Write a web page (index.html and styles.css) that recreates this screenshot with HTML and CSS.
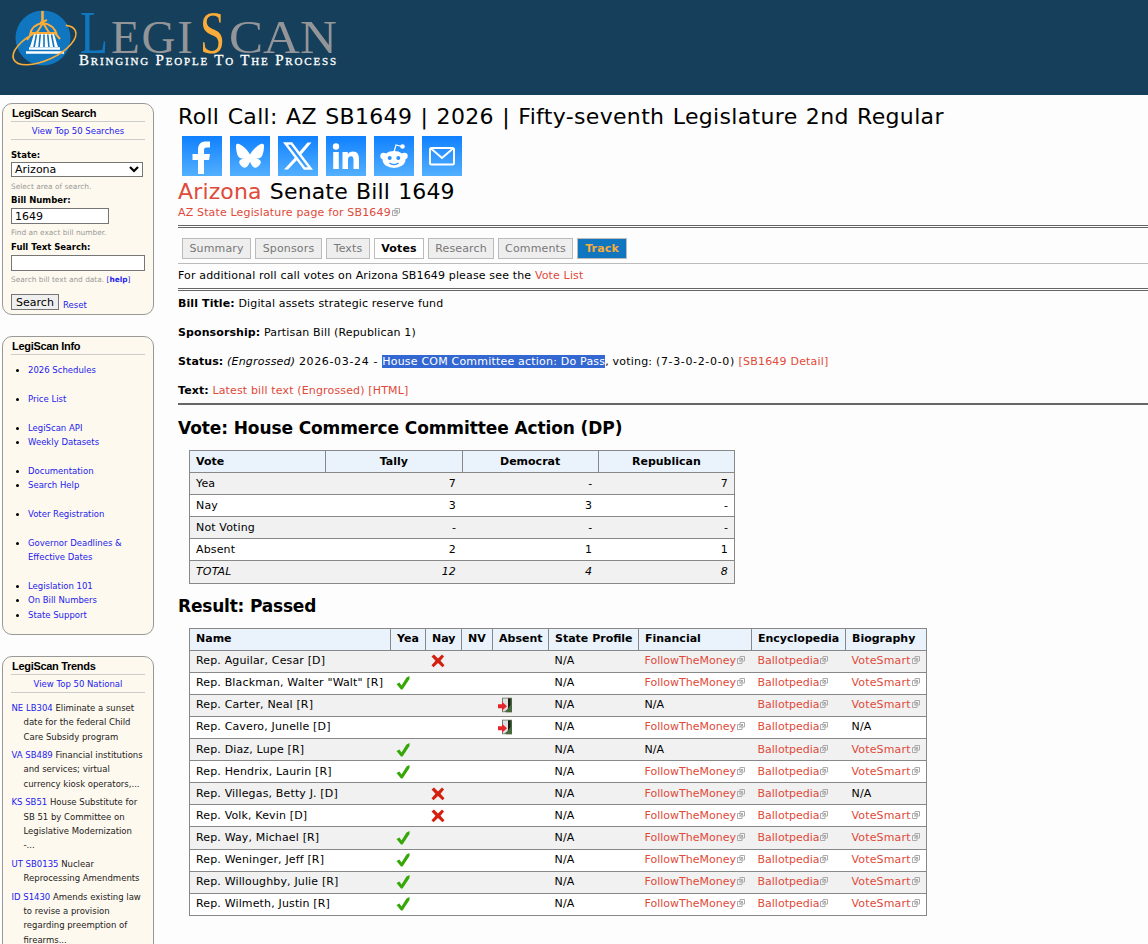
FILE: index.html
```html
<!DOCTYPE html>
<html lang="en">
<head>
  <meta charset="UTF-8">
  <meta name="viewport" content="width=device-width, initial-scale=1.0">
  <title>Roll Call: AZ SB1649 | LegiScan</title>
  <link rel="stylesheet" href="styles.css">
</head>
<body>

  <!-- Shared icons -->
  <svg class="sprite">
    <symbol id="ext" viewBox="0 0 8 8">
      <path d="M3 .5h4.500v4.500H3zM3 2.500H.5v5H5V5M2.500 5.500L5.500 2.500M3.500 2.500h2v2" fill="none" stroke="#aaa"/>
    </symbol>
    <symbol id="yea" viewBox="0 0 16 16">
      <path d="M1.500 9L4.500 7.500l2 3L11.500 2.500l3-1.500v3L7.500 14.500H6z" fill="#35a808"/>
    </symbol>
    <symbol id="nay" viewBox="0 0 16 16">
      <path d="M1.500 3.500L4 1.500 8 5.500 12 1.500 14 3.500 10.500 7.700l4 4.500-2 2L8 10l-4.500 4.200-2-2L5.500 7.700z" fill="#d3200f"/>
    </symbol>
    <symbol id="door" viewBox="0 0 16 16">
      <path d="M5 .7h10v14.500H5z" fill="#6f7a6a"/>
      <path d="M11 1.500h4v13.700H9z" fill="#48693c"/>
      <path d="M6 1.500h5v10.500L7 14.500H6z" fill="#e0e0e0"/>
      <path d="M11 1.500h2.500v6.500L9.500 14 11 11z" fill="#1c211a"/>
      <path d="M1 7.200h4V4.700l5 4.500-5 4.500v-2.500H1z" fill="#e8252a"/>
    </symbol>
  </svg>

  <header class="header">
    <svg class="logo" width="330" height="62" viewBox="0 0 330 62">
      <circle cx="30" cy="29" r="27.500" fill="#1176c0"/>
      <path d="M17 38l4-13h20l4 13z" fill="#fff"/>
      <path d="M21 38.500l2.500-13M26 38.500l1.200-13M31 38.500v-13M36 38.500l-1.200-13M41 38.500l-2.500-13" stroke="#1176c0" stroke-width="1.600"/>
      <path d="M16 39.500h31M13 43.500h38" stroke="#fff" stroke-width="2.500"/>
      <path d="M14 31l5-7h23l5 6M17 26c1-7 6-11 13-12 7 1 12 5 14 12M30 14l-7 11M30 14l7 11M27 14l7-3" fill="none" stroke="#fbac38" stroke-width="2"/>
      <path d="M29.500 2v12" stroke="#fbac38" stroke-width="2.600"/>
      <ellipse cx="31.500" cy="36" rx="34" ry="15" transform="rotate(-25 31.500 36)" fill="none" stroke="#fbac38" stroke-width="1.600" stroke-dasharray="128 30" stroke-dashoffset="-148" />
      <text class="logo-name" y="43.500"><tspan x="67" class="logo-l" textLength="28" lengthAdjust="spacingAndGlyphs">L</tspan><tspan x="98" textLength="82" lengthAdjust="spacing">EGI</tspan><tspan x="187" class="logo-s" textLength="25" lengthAdjust="spacingAndGlyphs">S</tspan><tspan x="216" textLength="108" lengthAdjust="spacingAndGlyphs">CAN</tspan></text>
      <text class="logo-tag" x="66" y="56" textLength="257">Bringing People To The Process</text>
    </svg>
  </header>

  <div class="page">

    <aside class="sidebar">
      <section class="box search">
        <h2>LegiScan Search</h2>
        <p class="top"><a href="#">View Top 50 Searches</a></p>
        <form>
          <label for="state">State:</label>
          <div class="select" id="state">Arizona
            <svg width="10" height="7" viewBox="0 0 10 7"><path d="M1 1l4 4 4-4" fill="none" stroke="#000" stroke-width="2.200"/></svg>
          </div>
          <p class="hint">Select area of search.</p>
          <label for="bill">Bill Number:</label>
          <input id="bill" class="bill" type="text" value="1649">
          <p class="hint">Find an exact bill number.</p>
          <label for="full">Full Text Search:</label>
          <input id="full" type="text">
          <p class="hint">Search bill text and data. <a href="#">[<b>help</b>]</a></p>
          <div class="actions"><button type="button">Search</button><a href="#">Reset</a></div>
        </form>
      </section>

      <section class="box info">
        <h2>LegiScan Info</h2>
        <ul>
          <li><a href="#">2026 Schedules</a></li>
          <li class="gap"><a href="#">Price List</a></li>
          <li class="gap"><a href="#">LegiScan API</a></li>
          <li><a href="#">Weekly Datasets</a></li>
          <li class="gap"><a href="#">Documentation</a></li>
          <li><a href="#">Search Help</a></li>
          <li class="gap"><a href="#">Voter Registration</a></li>
          <li class="gap"><a href="#">Governor Deadlines &amp;<br>Effective Dates</a></li>
          <li class="gap"><a href="#">Legislation 101</a></li>
          <li><a href="#">On Bill Numbers</a></li>
          <li><a href="#">State Support</a></li>
        </ul>
      </section>

      <section class="box trends">
        <h2>LegiScan Trends</h2>
        <p class="top"><a href="#">View Top 50 National</a></p>
        <p class="trend"><a href="#">NE LB304</a> Eliminate a sunset<br>date for the federal Child<br>Care Subsidy program</p>
        <p class="trend"><a href="#">VA SB489</a> Financial institutions<br>and services; virtual<br>currency kiosk operators,...</p>
        <p class="trend"><a href="#">KS SB51</a> House Substitute for<br>SB 51 by Committee on<br>Legislative Modernization<br>-...</p>
        <p class="trend"><a href="#">UT SB0135</a> Nuclear<br>Reprocessing Amendments</p>
        <p class="trend"><a href="#">ID S1430</a> Amends existing law<br>to revise a provision<br>regarding preemption of<br>firearms...</p>
      </section>
    </aside>

    <main class="content">
      <h1>Roll Call: AZ SB1649 | 2026 | Fifty-seventh Legislature 2nd Regular</h1>

      <div class="share">
        <a href="#"><svg viewBox="0 0 40 40"><path d="M16 38V24h-5.500v-6H16v-4c0-6 3-8.500 8-8.500h4v6h-3c-2.500 0-3 1.200-3 3.200V18h6l-1 6h-5v14z" fill="#fff"/></svg></a>
        <a href="#"><svg viewBox="0 0 40 40"><path d="M20 18.500C18 14.500 13 9.500 9 8c-2-.7-3 .2-3 2 0 3 .8 8 2 10 1.200 2 3.500 2.800 6 2.500-4 .7-6.500 2.500-3.500 6.500 4.500 6 8 1 9.500-3.500 1.500 4.500 5 9.500 9.500 3.500 3-4 .5-5.800-3.500-6.500 2.500.3 4.800-.5 6-2.500 1.200-2 2-7 2-10 0-1.800-1-2.700-3-2-4 1.500-9 6.500-11 10.500z" fill="#fff"/></svg></a>
        <a href="#"><svg viewBox="0 0 40 40"><path d="M7.500 7.500h6l19 25h-6z" fill="none" stroke="#fff" stroke-width="2.500"/><path d="M29.500 6.500h4L22.500 19.500l-2-2.500zM17 21.500l2 2.500L10 33.500H6z" fill="#fff"/></svg></a>
        <a href="#"><svg viewBox="0 0 40 40"><circle cx="10" cy="10.500" r="3.200" fill="#fff"/><path d="M7.200 16h5.600v17H7.200zM16.500 16h5.300v2.300c1-1.700 2.800-2.700 5.200-2.700 4.500 0 6 3 6 7.500V33h-5.500v-9c0-2.300-.6-3.700-2.500-3.700-2.200 0-3 1.500-3 3.700v9h-5.500z" fill="#fff"/></svg></a>
        <a href="#"><svg viewBox="0 0 40 40"><ellipse cx="20" cy="23.500" rx="11.500" ry="8.500" fill="#fff"/><circle cx="9.500" cy="20" r="3.200" fill="#fff"/><circle cx="30.500" cy="20" r="3.200" fill="#fff"/><path d="M20 16l2-7 6 1.500" fill="none" stroke="#fff" stroke-width="1.200"/><circle cx="28.500" cy="10.500" r="2.300" fill="#fff"/><circle cx="15.700" cy="22" r="2" fill="#2b93ff"/><circle cx="24.300" cy="22" r="2" fill="#2b93ff"/><path d="M15.500 27c2.500 2.200 6.500 2.200 9 0" fill="none" stroke="#2b93ff" stroke-width="1.400"/></svg></a>
        <a href="#"><svg viewBox="0 0 40 40"><rect x="8" y="12" width="24" height="16.500" rx="1.500" fill="none" stroke="#fff" stroke-width="2"/><path d="M9 12.500l11 9.500 11-9.500" fill="none" stroke="#fff" stroke-width="2"/></svg></a>
      </div>

      <p class="bill-name"><a href="#">Arizona</a> Senate Bill 1649</p>
      <p class="source"><a href="#">AZ State Legislature page for SB1649<svg class="ext"><use href="#ext"/></svg></a></p>

      <nav class="tabs">
        <a href="#" class="t1">Summary</a>
        <a href="#" class="t2">Sponsors</a>
        <a href="#" class="t3">Texts</a>
        <a href="#" class="t4 active">Votes</a>
        <a href="#" class="t5">Research</a>
        <a href="#" class="t6">Comments</a>
        <a href="#" class="t7 track">Track</a>
      </nav>

      <p class="note">For additional roll call votes on Arizona SB1649 please see the <a href="#">Vote List</a></p>

      <div class="meta">
        <p><b>Bill Title:</b> Digital assets strategic reserve fund</p>
        <p><b>Sponsorship:</b> Partisan Bill (Republican 1)</p>
        <p class="status"><b>Status:</b> <i>(Engrossed)</i> <span class="num">2026-03-24 - </span><span class="selected">House COM Committee action: Do Pass</span>, voting: <span class="num">(7-3-0-2-0-0)</span> <a href="#">[SB1649 Detail]</a></p>
        <p><b>Text:</b> <a href="#">Latest bill text (Engrossed) [HTML]</a></p>
      </div>

      <h3 class="vote-title">Vote: House Commerce Committee Action (DP)</h3>
      <table class="tally">
        <tr><th>Vote</th><th>Tally</th><th>Democrat</th><th>Republican</th></tr>
        <tr><td>Yea</td><td>7</td><td>-</td><td>7</td></tr>
        <tr><td>Nay</td><td>3</td><td>3</td><td>-</td></tr>
        <tr><td>Not Voting</td><td>-</td><td>-</td><td>-</td></tr>
        <tr><td>Absent</td><td>2</td><td>1</td><td>1</td></tr>
        <tr class="total"><td>TOTAL</td><td>12</td><td>4</td><td>8</td></tr>
      </table>

      <h3 class="result-title">Result: Passed</h3>
      <table class="votes">
        <colgroup><col class="c1"><col class="c2"><col class="c3"><col class="c4"><col class="c5"><col class="c6"><col class="c7"><col class="c8"><col class="c9"></colgroup>
        <tr><th>Name</th><th>Yea</th><th>Nay</th><th>NV</th><th>Absent</th><th>State Profile</th><th>Financial</th><th>Encyclopedia</th><th>Biography</th></tr>
        <tr><td>Rep. Aguilar, Cesar [D]</td><td></td><td><svg class="mark"><use href="#nay"/></svg></td><td></td><td></td><td>N/A</td><td><a href="#">FollowTheMoney<svg class="ext"><use href="#ext"/></svg></a></td><td><a href="#">Ballotpedia<svg class="ext"><use href="#ext"/></svg></a></td><td><a href="#">VoteSmart<svg class="ext"><use href="#ext"/></svg></a></td></tr>
        <tr><td>Rep. Blackman, Walter "Walt" [R]</td><td><svg class="mark"><use href="#yea"/></svg></td><td></td><td></td><td></td><td>N/A</td><td><a href="#">FollowTheMoney<svg class="ext"><use href="#ext"/></svg></a></td><td><a href="#">Ballotpedia<svg class="ext"><use href="#ext"/></svg></a></td><td><a href="#">VoteSmart<svg class="ext"><use href="#ext"/></svg></a></td></tr>
        <tr><td>Rep. Carter, Neal [R]</td><td></td><td></td><td></td><td><svg class="mark"><use href="#door"/></svg></td><td>N/A</td><td>N/A</td><td><a href="#">Ballotpedia<svg class="ext"><use href="#ext"/></svg></a></td><td><a href="#">VoteSmart<svg class="ext"><use href="#ext"/></svg></a></td></tr>
        <tr><td>Rep. Cavero, Junelle [D]</td><td></td><td></td><td></td><td><svg class="mark"><use href="#door"/></svg></td><td>N/A</td><td><a href="#">FollowTheMoney<svg class="ext"><use href="#ext"/></svg></a></td><td><a href="#">Ballotpedia<svg class="ext"><use href="#ext"/></svg></a></td><td>N/A</td></tr>
        <tr><td>Rep. Diaz, Lupe [R]</td><td><svg class="mark"><use href="#yea"/></svg></td><td></td><td></td><td></td><td>N/A</td><td>N/A</td><td><a href="#">Ballotpedia<svg class="ext"><use href="#ext"/></svg></a></td><td><a href="#">VoteSmart<svg class="ext"><use href="#ext"/></svg></a></td></tr>
        <tr><td>Rep. Hendrix, Laurin [R]</td><td><svg class="mark"><use href="#yea"/></svg></td><td></td><td></td><td></td><td>N/A</td><td><a href="#">FollowTheMoney<svg class="ext"><use href="#ext"/></svg></a></td><td><a href="#">Ballotpedia<svg class="ext"><use href="#ext"/></svg></a></td><td><a href="#">VoteSmart<svg class="ext"><use href="#ext"/></svg></a></td></tr>
        <tr><td>Rep. Villegas, Betty J. [D]</td><td></td><td><svg class="mark"><use href="#nay"/></svg></td><td></td><td></td><td>N/A</td><td><a href="#">FollowTheMoney<svg class="ext"><use href="#ext"/></svg></a></td><td><a href="#">Ballotpedia<svg class="ext"><use href="#ext"/></svg></a></td><td>N/A</td></tr>
        <tr><td>Rep. Volk, Kevin [D]</td><td></td><td><svg class="mark"><use href="#nay"/></svg></td><td></td><td></td><td>N/A</td><td><a href="#">FollowTheMoney<svg class="ext"><use href="#ext"/></svg></a></td><td><a href="#">Ballotpedia<svg class="ext"><use href="#ext"/></svg></a></td><td><a href="#">VoteSmart<svg class="ext"><use href="#ext"/></svg></a></td></tr>
        <tr><td>Rep. Way, Michael [R]</td><td><svg class="mark"><use href="#yea"/></svg></td><td></td><td></td><td></td><td>N/A</td><td><a href="#">FollowTheMoney<svg class="ext"><use href="#ext"/></svg></a></td><td><a href="#">Ballotpedia<svg class="ext"><use href="#ext"/></svg></a></td><td><a href="#">VoteSmart<svg class="ext"><use href="#ext"/></svg></a></td></tr>
        <tr><td>Rep. Weninger, Jeff [R]</td><td><svg class="mark"><use href="#yea"/></svg></td><td></td><td></td><td></td><td>N/A</td><td><a href="#">FollowTheMoney<svg class="ext"><use href="#ext"/></svg></a></td><td><a href="#">Ballotpedia<svg class="ext"><use href="#ext"/></svg></a></td><td><a href="#">VoteSmart<svg class="ext"><use href="#ext"/></svg></a></td></tr>
        <tr><td>Rep. Willoughby, Julie [R]</td><td><svg class="mark"><use href="#yea"/></svg></td><td></td><td></td><td></td><td>N/A</td><td><a href="#">FollowTheMoney<svg class="ext"><use href="#ext"/></svg></a></td><td><a href="#">Ballotpedia<svg class="ext"><use href="#ext"/></svg></a></td><td><a href="#">VoteSmart<svg class="ext"><use href="#ext"/></svg></a></td></tr>
        <tr><td>Rep. Wilmeth, Justin [R]</td><td><svg class="mark"><use href="#yea"/></svg></td><td></td><td></td><td></td><td>N/A</td><td><a href="#">FollowTheMoney<svg class="ext"><use href="#ext"/></svg></a></td><td><a href="#">Ballotpedia<svg class="ext"><use href="#ext"/></svg></a></td><td><a href="#">VoteSmart<svg class="ext"><use href="#ext"/></svg></a></td></tr>
      </table>
    </main>
  </div>
</body>
</html>
```
FILE: styles.css
```css
/* General Styles */
* {
  box-sizing: border-box;
}

body {
  margin: 0;
  height: 944px;
  overflow: hidden;
  font-family: Verdana, "DejaVu Sans", sans-serif;
  font-size: 11px;
  color: #000;
  background-color: #fdfdfd;
}

h1, h2, h3, p, ul {
  margin: 0;
  padding: 0;
  white-space: nowrap;
}

a {
  text-decoration: none;
}

.sprite {
  display: none;
}

/* Header */
.header {
  height: 95px;
  padding: 9px 0 0 13px;
  background-color: #153f5a;
}

.logo {
  display: block;
  overflow: visible;
}

.logo-name {
  font-family: "Liberation Serif", serif;
  font-size: 47px;
  fill: #939598;
}

.logo-l,
.logo-s {
  font-size: 61px;
  fill: #1176c0;
}

.logo-s {
  fill: #fbac38;
}

.logo-tag {
  font-family: "Liberation Serif", serif;
  font-size: 15px;
  font-variant: small-caps;
  fill: #fff;
  stroke: #fff;
  stroke-width: 0.3px;
}

.page {
  display: flex;
  height: 849px;
  overflow: hidden;
}

/* Sidebar */
.sidebar {
  width: 178px;
  padding: 8px 0 0 2px;
}

.box {
  width: 152px;
  margin-bottom: 21px;
  padding: 0 8px;
  border: 1px solid #999;
  border-radius: 10px;
  background-color: #fef9ee;
  font-size: 8.5px;
}

.box h2 {
  height: 18px;
  line-height: 19px;
  padding-left: 1px;
  border-bottom: 1px solid #ccc;
  font-family: Arial, "Liberation Sans", sans-serif;
  font-size: 11px;
  letter-spacing: -0.3px;
}

.box a {
  color: #22e;
}

.top {
  height: 18px;
  line-height: 19px;
  border-bottom: 1px solid #ccc;
  text-align: center;
}

.search {
  height: 212px;
}

.search form {
  padding-top: 9px;
}

.search label {
  display: block;
  height: 13px;
  line-height: 13px;
  font-weight: bold;
}

.search .select,
.search input {
  display: flex;
  align-items: center;
  justify-content: space-between;
  width: 132px;
  height: 15px;
  padding: 0 3px;
  border: 1px solid #767676;
  background-color: #fff;
  font-family: inherit;
  font-size: 11px;
}

.search input {
  width: 134px;
  height: 16px;
  margin-top: 1px;
}

.search input.bill {
  width: 98px;
}

.hint {
  height: 17px;
  line-height: 19px;
  color: #999;
  font-size: 7.400px;
}

.search input ~ .hint {
  line-height: 18px;
}

.actions {
  display: flex;
  align-items: flex-end;
  gap: 4px;
  margin-top: 6px;
}

.actions button {
  width: 48px;
  height: 16px;
  padding: 0;
  border: 1px solid #767676;
  background-color: #efefef;
  font-family: inherit;
  font-size: 11px;
  line-height: 13px;
}

.info {
  height: 299px;
}

.info ul {
  padding: 8px 0 0 17px;
  line-height: 14.400px;
}

.info .gap {
  margin-top: 14.400px;
}

.trends {
  height: 330px;
}

.trend {
  margin-top: 4.300px;
  padding-left: 12.500px;
  text-indent: -12px;
  line-height: 14.300px;
  color: #222;
}

.top + .trend {
  margin-top: 8px;
}

/* Main content */
.content {
  width: 970px;
  letter-spacing: 0.15px;
}

.content a {
  color: #e04a3a;
}

.content b {
  letter-spacing: 0.1px;
}

h1,
.bill-name {
  font-size: 22px;
  font-weight: normal;
  line-height: 26px;
}

h1 {
  padding-top: 9px;
  height: 41px;
  letter-spacing: 0.33px;
  word-spacing: 1px;
}

.share {
  display: flex;
  gap: 8px;
  padding-left: 4px;
}

.share a {
  width: 40px;
  height: 40px;
  background: linear-gradient(#0f80ff, #53b0ff);
}

.share svg {
  display: block;
}

.bill-name {
  margin-top: 3px;
  word-spacing: 1px;
}

.source {
  height: 23px;
  line-height: 15px;
  border-bottom: 3px double #666;
}

.ext {
  width: 8px;
  height: 8px;
  margin-left: 1px;
}

/* Tabs */
.tabs {
  display: flex;
  gap: 4px;
  height: 36px;
  padding: 10px 0 0 4px;
  border-bottom: 1px solid #bbb;
}

.tabs a {
  height: 21px;
  line-height: 19px;
  border: 1px solid #bbb;
  background-color: #eee;
  color: #777;
  text-align: center;
}

.tabs .active {
  background-color: #fff;
  color: #000;
  font-weight: bold;
}

.tabs .track {
  background-color: #1176c0;
  color: #fbac38;
  font-weight: bold;
}

.t1 { width: 69px; }
.t2 { width: 67px; }
.t3 { width: 44px; }
.t4 { width: 50px; }
.t5 { width: 66px; }
.t6 { width: 75px; }
.t7 { width: 50px; }

.note {
  height: 27px;
  line-height: 24px;
  border-bottom: 3px double #666;
}

.meta {
  height: 114px;
  padding-top: 1px;
  border-bottom: 2px solid #666;
}

.meta p {
  height: 29px;
  line-height: 24px;
}

.status {
  letter-spacing: 0.2px;
}

.num {
  letter-spacing: 0.65px;
}

.selected {
  background-color: #3367d1;
  color: #fff;
}

h3 {
  font-size: 17px;
  line-height: 22px;
}

.vote-title {
  padding: 12px 0 11px;
  letter-spacing: -0.1px;
}

.result-title {
  padding: 11px 0 11px;
  letter-spacing: -0.2px;
}

/* Tables */
table {
  margin-left: 11px;
  border-collapse: collapse;
  table-layout: fixed;
  border: 1px solid #888;
  white-space: nowrap;
}

tr {
  height: 22.100px;
  border-bottom: 1px solid #888;
}

tr:nth-child(even) {
  background-color: #f1f1f1;
}

tr:nth-child(odd) {
  background-color: #fff;
}

table tr:first-child {
  background-color: #eaf3fb;
}

th,
td {
  padding: 0 6px;
  line-height: 14px;
  text-align: left;
}

th {
  border: 1px solid #888;
  letter-spacing: 0;
}

.tally {
  width: 546px;
}

.tally th + th {
  text-align: center;
}

.tally td + td {
  text-align: right;
}

.total {
  font-style: italic;
}

.votes {
  width: 738px;
}

.votes td:nth-child(7),
.votes td:nth-child(8) {
  letter-spacing: 0;
}

.c1 { width: 201px; }
.c2 { width: 35px; }
.c3 { width: 36px; }
.c4 { width: 31px; }
.c5 { width: 56px; }
.c6 { width: 90px; }
.c7 { width: 113px; }
.c8 { width: 94px; }
.c9 { width: 81px; }

.mark {
  display: block;
  width: 16px;
  height: 16px;
  margin-left: -1.500px;
}
```
